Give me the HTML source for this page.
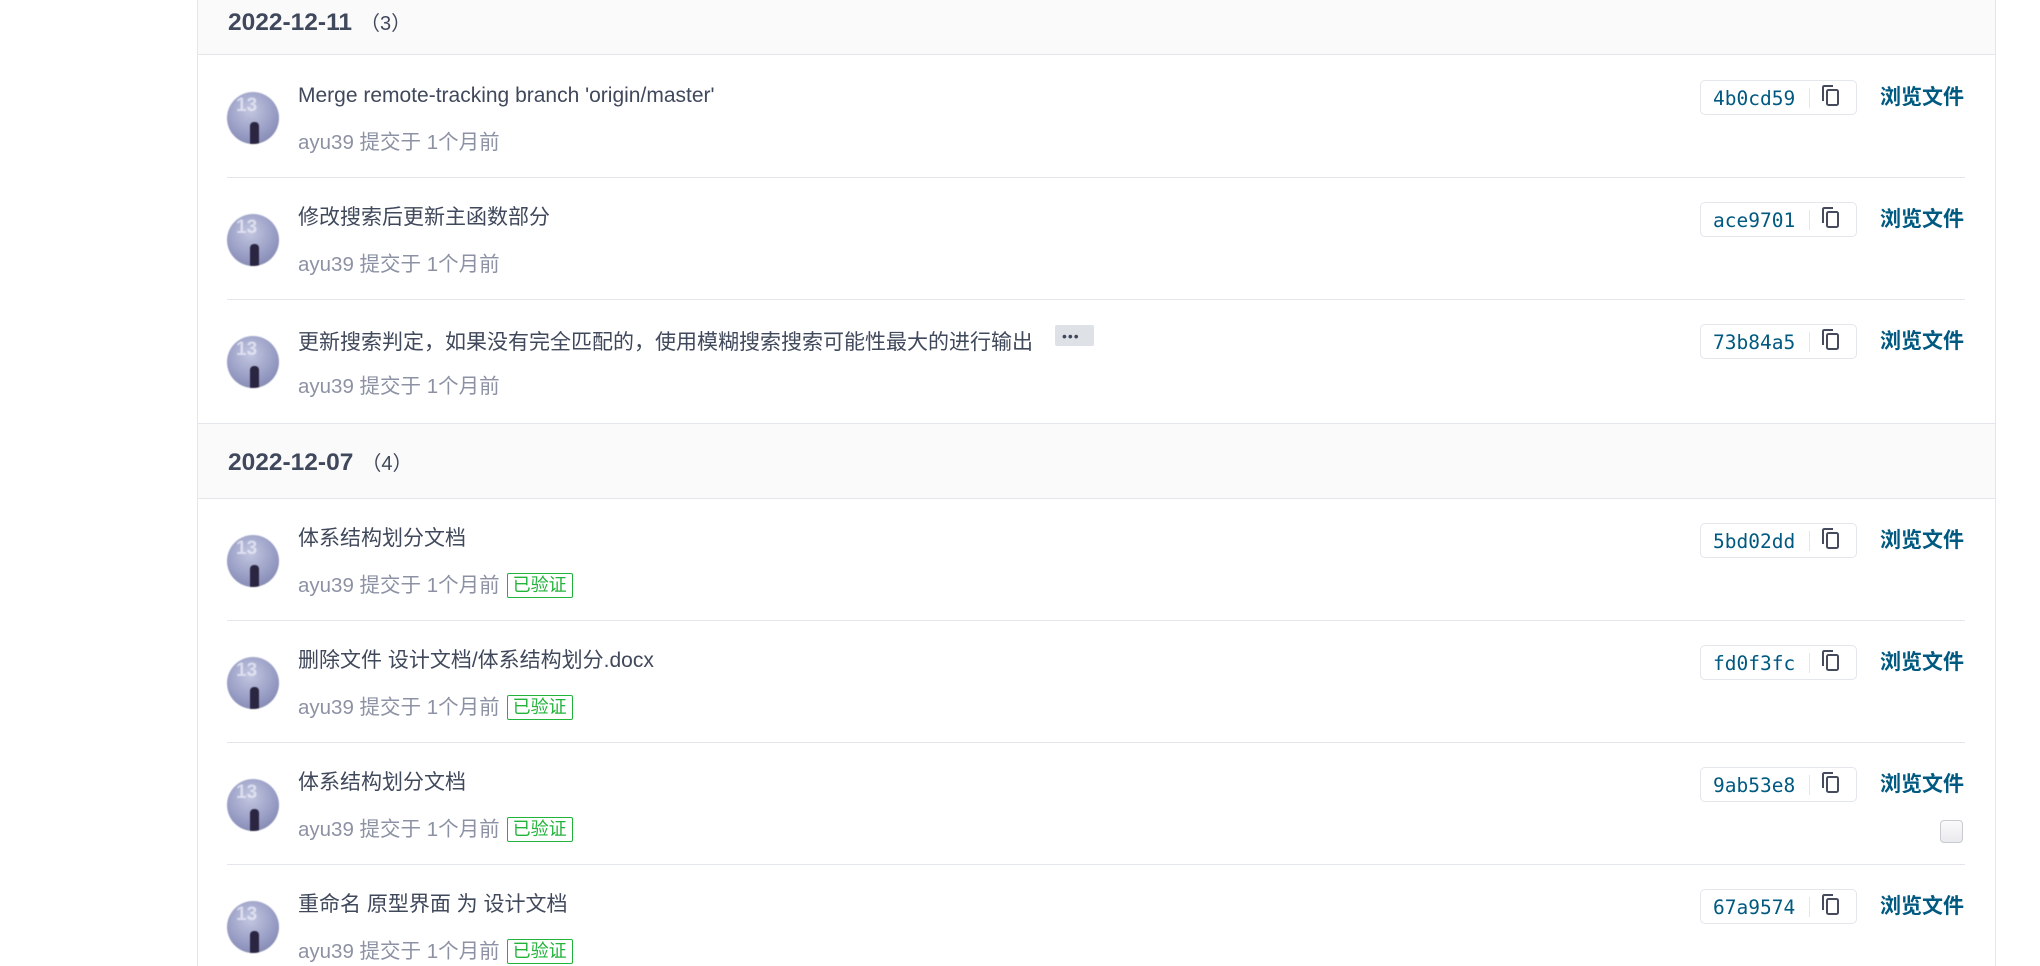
<!DOCTYPE html>
<html><head><meta charset="utf-8"><style>
*{margin:0;padding:0;box-sizing:border-box}
html,body{width:2040px;height:966px;overflow:hidden}
body{background:#fff;position:relative;font-family:"Liberation Sans","Noto Sans CJK SC",sans-serif}
.box{position:absolute;left:197px;top:0;width:1799px;height:966px;border-left:1px solid #e3e6ea;border-right:1px solid #e3e6ea}
.hdr{position:absolute;left:198px;width:1797px;background:#fafafa;border-bottom:1px solid #e3e6ea}
.hdr .d{position:absolute;left:30px;font-weight:bold;font-size:24.5px;color:#40485b}
.hdr .c{font-weight:normal;font-size:20px;color:#40485b;margin-left:8px}
.row{position:absolute;left:227px;width:1738px;height:122px;border-bottom:1px solid #e3e6ea}
.av{position:absolute;left:0;top:36px;width:52px;height:52px;border-radius:50%;background:radial-gradient(circle at 45% 35%,#c3c7e0,#9499c2 60%,#767ba3);overflow:hidden;filter:blur(.6px)}
.av b{position:absolute;left:9px;top:3px;font-size:19px;font-weight:bold;color:#eef0fa;opacity:.7;font-family:"Liberation Sans",sans-serif}
.av:after{content:"";position:absolute;left:23px;top:30px;width:9px;height:22px;border-radius:4px 4px 0 0;background:#2a2540}
.t{position:absolute;left:71px;top:25px;font-size:21px;color:#40485b;white-space:nowrap;line-height:30px}
.m{position:absolute;left:71px;top:72px;font-size:20.5px;color:#8c92a4;white-space:nowrap;line-height:30px}
.bd{display:inline-block;border:1px solid #22b33a;color:#22b33a;font-size:18px;line-height:23px;padding:0 5px;border-radius:2px;margin-left:7px;vertical-align:1px}
.h{position:absolute;left:1473px;top:24px;width:157px;height:35px;border:1px solid #e3e6ea;border-radius:5px}
.h span{position:absolute;left:12px;top:6px;font-family:"DejaVu Sans Mono","Liberation Mono",monospace;font-size:19.5px;color:#005980}
.h i{position:absolute;left:108px;top:7px;height:20px;border-left:1px solid #e3e6ea}
.h svg{position:absolute;left:119px;top:4px}
.b{position:absolute;left:1653px;top:25px;font-size:21px;font-weight:bold;color:#005980;white-space:nowrap}
.dots{display:inline-block;width:39px;height:21px;background:#dee1e6;border-radius:2px;margin-left:22px;vertical-align:3px;position:relative}
.dots:after{content:"•••";position:absolute;left:7px;top:-4px;font-size:14px;color:#40485b;letter-spacing:1px}
.cb{position:absolute;left:1713px;top:77px;width:23px;height:23px;border:1px solid #c8cbd2;border-radius:4px;background:linear-gradient(#fafafa,#e9eaee)}
</style></head><body>
<div class="box"></div>
<div class="hdr" style="top:-30px;height:85px"><div class="d" style="top:37px">2022-12-11<span class="c">（3）</span></div></div>
<div class="hdr" style="top:423px;height:76px;border-top:1px solid #e3e6ea"><div class="d" style="top:23px">2022-12-07<span class="c">（4）</span></div></div>

<svg width="0" height="0" style="position:absolute"><defs><g id="cp"><path d="M3 16V2.5Q3 1 4.5 1H13" fill="none" stroke="#454b5c" stroke-width="2"/><rect x="7" y="5" width="11" height="15" rx="1.5" fill="none" stroke="#454b5c" stroke-width="2"/></g></defs></svg>

<div class="row" style="top:56px"><div class="av"><b>13</b></div><div class="t">Merge remote-tracking branch 'origin/master'</div><div class="m">ayu39 提交于 1个月前</div><div class="h"><span>4b0cd59</span><i></i><svg width="22" height="24"><use href="#cp"/></svg></div><div class="b">浏览文件</div></div>
<div class="row" style="top:178px"><div class="av"><b>13</b></div><div class="t">修改搜索后更新主函数部分</div><div class="m">ayu39 提交于 1个月前</div><div class="h"><span>ace9701</span><i></i><svg width="22" height="24"><use href="#cp"/></svg></div><div class="b">浏览文件</div></div>
<div class="row" style="top:300px;border-bottom:none"><div class="av"><b>13</b></div><div class="t">更新搜索判定，如果没有完全匹配的，使用模糊搜索搜索可能性最大的进行输出<span class="dots"></span></div><div class="m">ayu39 提交于 1个月前</div><div class="h"><span>73b84a5</span><i></i><svg width="22" height="24"><use href="#cp"/></svg></div><div class="b">浏览文件</div></div>

<div class="row" style="top:499px"><div class="av"><b>13</b></div><div class="t">体系结构划分文档</div><div class="m">ayu39 提交于 1个月前<span class="bd">已验证</span></div><div class="h"><span>5bd02dd</span><i></i><svg width="22" height="24"><use href="#cp"/></svg></div><div class="b">浏览文件</div></div>
<div class="row" style="top:621px"><div class="av"><b>13</b></div><div class="t">删除文件 设计文档/体系结构划分.docx</div><div class="m">ayu39 提交于 1个月前<span class="bd">已验证</span></div><div class="h"><span>fd0f3fc</span><i></i><svg width="22" height="24"><use href="#cp"/></svg></div><div class="b">浏览文件</div></div>
<div class="row" style="top:743px"><div class="av"><b>13</b></div><div class="t">体系结构划分文档</div><div class="m">ayu39 提交于 1个月前<span class="bd">已验证</span></div><div class="h"><span>9ab53e8</span><i></i><svg width="22" height="24"><use href="#cp"/></svg></div><div class="b">浏览文件</div><div class="cb"></div></div>
<div class="row" style="top:865px"><div class="av"><b>13</b></div><div class="t">重命名 原型界面 为 设计文档</div><div class="m">ayu39 提交于 1个月前<span class="bd">已验证</span></div><div class="h"><span>67a9574</span><i></i><svg width="22" height="24"><use href="#cp"/></svg></div><div class="b">浏览文件</div></div>
</body></html>
